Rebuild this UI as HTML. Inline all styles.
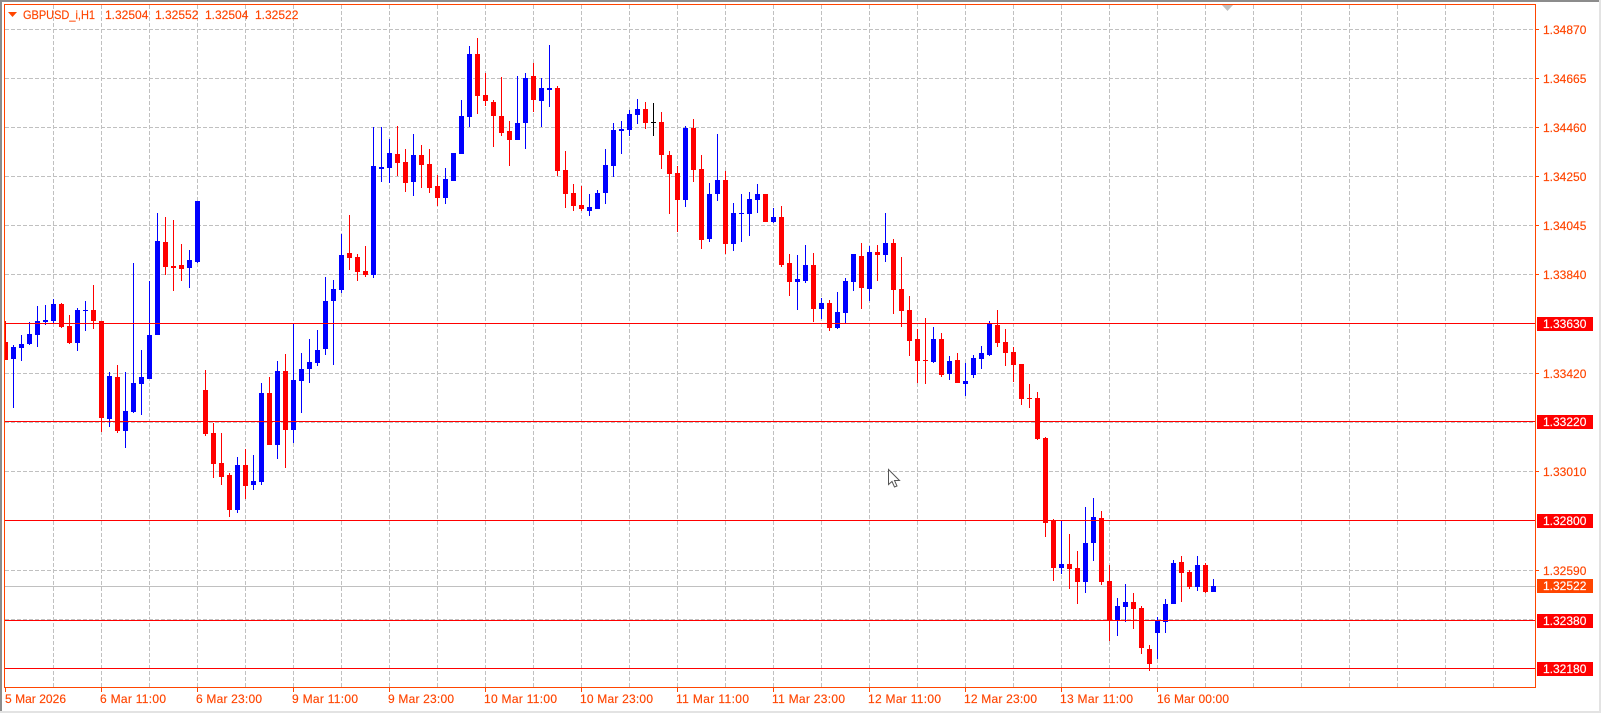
<!DOCTYPE html>
<html lang="en">
<head>
<meta charset="utf-8">
<title>GBPUSD_i,H1</title>
<style>
html,body{margin:0;padding:0;background:#fff;width:1601px;height:713px;overflow:hidden}
svg{display:block}
text{font-family:"Liberation Sans",Arial,sans-serif;font-size:12px;fill:#ff4500;stroke:#ff4500;stroke-width:.15px}
text.w{fill:#fff;stroke:#fff}
</style>
</head>
<body>
<svg width="1601" height="713" viewBox="0 0 1601 713" xmlns="http://www.w3.org/2000/svg">
<rect width="1601" height="713" fill="#fff"/>
<g shape-rendering="crispEdges">
<!-- window edges -->
<rect x="0" y="0" width="1601" height="2" fill="#8c8c8c"/>
<rect x="0" y="0" width="2" height="713" fill="#8c8c8c"/>
<rect x="0" y="711" width="1601" height="2" fill="#e3e3e3"/>
<rect x="1599" y="0" width="2" height="713" fill="#e3e3e3"/>
<!-- grid -->
<path fill="none" stroke="#c0c0c0" stroke-width="1" stroke-dasharray="4 2" d="M5 29.5H1535M5 78.5H1535M5 127.5H1535M5 176.5H1535M5 225.5H1535M5 274.5H1535M5 373.5H1535M5 422.5H1535M5 471.5H1535M5 570.5H1535M5 619.5H1535M5 323.5H1535M5 520.5H1535M5 668.5H1535"/>
<path fill="none" stroke="#c0c0c0" stroke-width="1" stroke-dasharray="4 2" d="M53.5 5V687M101.5 5V687M149.5 5V687M197.5 5V687M245.5 5V687M293.5 5V687M341.5 5V687M389.5 5V687M437.5 5V687M485.5 5V687M533.5 5V687M581.5 5V687M629.5 5V687M677.5 5V687M725.5 5V687M773.5 5V687M821.5 5V687M869.5 5V687M917.5 5V687M965.5 5V687M1013.5 5V687M1061.5 5V687M1109.5 5V687M1157.5 5V687M1205.5 5V687M1253.5 5V687M1301.5 5V687M1349.5 5V687M1397.5 5V687M1445.5 5V687M1493.5 5V687"/>
<!-- bid line -->
<rect x="5" y="586" width="1530" height="1" fill="#c0c0c0"/>
<!-- red wicks -->
<path fill="none" stroke="#f00" stroke-width="1" d="M5.5 321V360M61.5 303V328M69.5 315V344M93.5 285V329M101.5 321V432M117.5 365V433M165.5 217V275M173.5 220V291M181.5 244V281M205.5 370V436M213.5 423V478M221.5 433V485M229.5 473V517M245.5 449V499M269.5 377V445M285.5 354V468M349.5 215V270M357.5 254V281M365.5 246V277M397.5 126V176M405.5 149V192M421.5 145V188M429.5 149V193M437.5 175V206M477.5 38V114M485.5 73V106M493.5 100V147M501.5 77V136M509.5 121V166M533.5 63V112M557.5 86V176M565.5 151V208M573.5 184V211M581.5 186V211M645.5 102V129M661.5 112V169M669.5 151V214M677.5 166V232M693.5 119V182M701.5 155V249M725.5 171V254M781.5 206V267M789.5 254V296M813.5 253V322M829.5 300V331M861.5 243V309M877.5 245V281M893.5 239V314M901.5 257V327M909.5 296V356M917.5 329V383M925.5 318V384M941.5 333V377M957.5 353V383M997.5 310V347M1005.5 329V366M1013.5 347V382M1021.5 364V405M1029.5 384V408M1037.5 392V440M1045.5 437V537M1053.5 519V581M1069.5 534V589M1077.5 551V604M1101.5 511V585M1109.5 565V641M1133.5 593V629M1141.5 606V654M1149.5 645V671M1181.5 556V602M1189.5 570V589M1205.5 563V593"/>
<!-- red bodies -->
<rect x="5" y="342" width="3" height="18" fill="#f00"/>
<path fill="none" stroke="#f00" stroke-width="5" d="M61.5 304V327M69.5 326V343M93.5 310V321M101.5 321V418M117.5 377V431M165.5 242V267M173.5 266V268M181.5 265V269M205.5 390V434M213.5 433V464M221.5 463V477M229.5 475V510M245.5 465V486M269.5 393V445M285.5 371V430M349.5 253V258M357.5 257V272M365.5 271V275M397.5 154V163M405.5 162V183M421.5 155V165M429.5 164V188M437.5 186V198M477.5 54V96M485.5 95V101M493.5 102V116M501.5 116V133M509.5 131V140M533.5 76V100M557.5 88V171M565.5 170V194M573.5 193V206M581.5 205V209M645.5 109V123M661.5 122V155M669.5 155V174M677.5 173V200M693.5 128V170M701.5 169V240M725.5 180V244M765.5 194V222M781.5 217V265M789.5 263V282M813.5 265V309M829.5 303V328M861.5 256V288M877.5 252V255M893.5 243V290M901.5 289V311M909.5 310V341M917.5 339V361M925.5 360V361M941.5 339V375M957.5 360V383M997.5 325V343M1005.5 342V353M1013.5 352V365M1021.5 364V399M1029.5 398V399M1037.5 398V439M1045.5 438V523M1053.5 520V568M1069.5 564V569M1077.5 568V582M1101.5 518V582M1109.5 581V621M1133.5 602V609M1141.5 608V648M1149.5 649V664M1181.5 562V573M1189.5 572V587M1205.5 565V592"/>
<!-- blue wicks -->
<path fill="none" stroke="#00f" stroke-width="1" d="M13.5 345V408M21.5 335V361M29.5 322V345M37.5 306V347M45.5 305V325M53.5 299V324M77.5 308V351M85.5 301V331M109.5 372V427M125.5 372V448M133.5 263V413M141.5 350V415M149.5 281V379M157.5 213V335M189.5 250V288M197.5 201V263M237.5 457V513M253.5 455V490M261.5 383V485M277.5 361V459M293.5 323V443M301.5 353V413M309.5 339V383M317.5 330V366M325.5 277V355M333.5 280V365M341.5 234V293M373.5 127V278M381.5 127V182M389.5 139V183M413.5 134V196M445.5 168V204M461.5 100V154M469.5 46V127M517.5 76V140M525.5 73V149M541.5 78V127M549.5 45V107M589.5 194V216M597.5 190V209M605.5 149V204M613.5 123V177M621.5 121V154M629.5 110V136M637.5 99V124M685.5 126V207M709.5 183V242M717.5 134V201M733.5 203V251M741.5 194V242M749.5 192V236M757.5 184V213M773.5 208V223M797.5 255V310M805.5 245V283M821.5 298V319M837.5 292V329M845.5 278V323M853.5 254V291M869.5 246V301M885.5 213V262M933.5 327V363M949.5 356V380M965.5 363V396M973.5 355V378M981.5 346V369M989.5 321V356M1061.5 521V574M1085.5 507V593M1093.5 498V561M1117.5 598V636M1125.5 584V622M1157.5 617V659M1165.5 599V633M1173.5 560V604M1197.5 556V591M1213.5 579V592"/>
<!-- blue bodies -->
<path fill="none" stroke="#00f" stroke-width="5" d="M13.5 347V359M21.5 344V348M29.5 334V344M37.5 321V335M45.5 320V322M53.5 304V321M77.5 310V343M85.5 310V311M109.5 376V419M125.5 411V431M133.5 383V412M141.5 377V384M149.5 335V379M157.5 241V335M189.5 260V268M197.5 201V262M237.5 465V510M253.5 481V485M261.5 393V482M277.5 371V445M293.5 380V430M301.5 369V381M309.5 362V369M317.5 350V363M325.5 301V349M333.5 289V301M341.5 255V290M373.5 166V275M381.5 167V169M389.5 153V168M413.5 155V182M445.5 179V198M453.5 153V181M461.5 116V154M469.5 54V117M517.5 123V140M525.5 78V123M541.5 88V101M549.5 88V90M589.5 207V211M597.5 193V209M605.5 165V193M613.5 130V166M621.5 129V131M629.5 114V130M637.5 109V115M685.5 128V200M709.5 194V239M717.5 180V194M733.5 213V244M741.5 213V214M749.5 199V214M757.5 194V200M773.5 217V222M797.5 279V282M805.5 265V281M821.5 303V309M837.5 312V328M845.5 281V313M853.5 254V282M869.5 252V289M885.5 243V255M933.5 339V362M949.5 361V374M965.5 381V384M973.5 358V375M981.5 353V359M989.5 324V355M1061.5 564V568M1085.5 543V582M1093.5 517V543M1117.5 606V621M1125.5 602V607M1157.5 621V633M1165.5 604V622M1173.5 563V604M1197.5 565V587M1213.5 586V592"/>
<!-- black doji -->
<path fill="none" stroke="#000" stroke-width="1" d="M653.5 103V136"/>
<path fill="none" stroke="#000" stroke-width="5" d="M653.5 122V123"/>
<!-- horizontal lines -->
<g fill="#f00">
<rect x="5" y="323" width="1530" height="1"/>
<rect x="5" y="421" width="1530" height="1"/>
<rect x="5" y="520" width="1530" height="1"/>
<rect x="5" y="620" width="1530" height="1"/>
<rect x="5" y="668" width="1530" height="1"/>
</g>
<!-- frame -->
<rect x="4" y="4" width="1532" height="1" fill="#ff4500"/>
<rect x="4" y="687" width="1532" height="1" fill="#ff4500"/>
<rect x="4" y="4" width="1" height="684" fill="#ff4500"/>
<rect x="1535" y="4" width="1" height="684" fill="#ff4500"/>
<!-- axis ticks -->
<path fill="none" stroke="#ff4500" stroke-width="1" d="M1536 29.5h3M1536 78.5h3M1536 127.5h3M1536 176.5h3M1536 225.5h3M1536 274.5h3M1536 373.5h3M1536 471.5h3M1536 570.5h3M5.5 688v4M101.5 688v4M197.5 688v4M293.5 688v4M389.5 688v4M485.5 688v4M581.5 688v4M677.5 688v4M773.5 688v4M869.5 688v4M965.5 688v4M1061.5 688v4M1157.5 688v4"/>
<!-- price labels background -->
<rect x="1537" y="317" width="56" height="14" fill="#f00"/>
<rect x="1537" y="415" width="56" height="14" fill="#f00"/>
<rect x="1537" y="514" width="56" height="14" fill="#f00"/>
<rect x="1537" y="579" width="56" height="14" fill="#ff4500"/>
<rect x="1537" y="614" width="56" height="14" fill="#f00"/>
<rect x="1537" y="662" width="56" height="14" fill="#f00"/>
</g>
<!-- markers -->
<polygon points="8,12 17,12 12.5,17" fill="#ff4500"/>
<polygon points="1222,5 1233,5 1227.5,11" fill="#c0c0c0"/>
<!-- header text -->
<text x="23" y="19" textLength="72" lengthAdjust="spacingAndGlyphs">GBPUSD_i,H1</text>
<text x="105" y="19">1.32504</text>
<text x="155" y="19">1.32552</text>
<text x="205" y="19">1.32504</text>
<text x="255" y="19">1.32522</text>
<!-- price axis -->
<text x="1543" y="34">1.34870</text>
<text x="1543" y="83">1.34665</text>
<text x="1543" y="132">1.34460</text>
<text x="1543" y="181">1.34250</text>
<text x="1543" y="230">1.34045</text>
<text x="1543" y="279">1.33840</text>
<text class="w" x="1543" y="328">1.33630</text>
<text x="1543" y="378">1.33420</text>
<text class="w" x="1543" y="426">1.33220</text>
<text x="1543" y="476">1.33010</text>
<text class="w" x="1543" y="525">1.32800</text>
<text x="1543" y="575">1.32590</text>
<text class="w" x="1543" y="590">1.32522</text>
<text class="w" x="1543" y="625">1.32380</text>
<text class="w" x="1543" y="673">1.32180</text>
<!-- time axis -->
<text x="5" y="703" textLength="61">5 Mar 2026</text>
<text x="100" y="703" textLength="66">6 Mar 11:00</text>
<text x="196" y="703" textLength="66">6 Mar 23:00</text>
<text x="292" y="703" textLength="66">9 Mar 11:00</text>
<text x="388" y="703" textLength="66">9 Mar 23:00</text>
<text x="484" y="703" textLength="73">10 Mar 11:00</text>
<text x="580" y="703" textLength="73">10 Mar 23:00</text>
<text x="676" y="703" textLength="73">11 Mar 11:00</text>
<text x="772" y="703" textLength="73">11 Mar 23:00</text>
<text x="868" y="703" textLength="73">12 Mar 11:00</text>
<text x="964" y="703" textLength="73">12 Mar 23:00</text>
<text x="1060" y="703" textLength="73">13 Mar 11:00</text>
<text x="1157" y="703" textLength="72">16 Mar 00:00</text>
<!-- cursor -->
<path d="M888.5 469.5V484.5L892 481.5L894.5 487L897 486L894.5 480.5H899.5Z" fill="#fff" stroke="#555" stroke-width="1"/>
</svg>
</body>
</html>
